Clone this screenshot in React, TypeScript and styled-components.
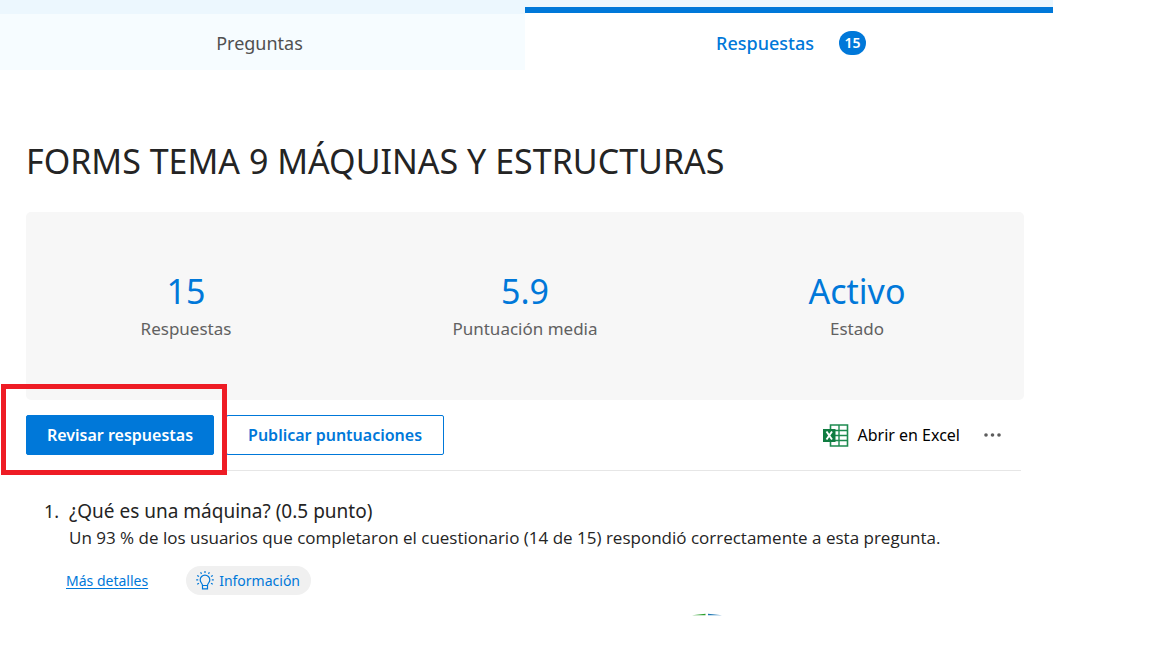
import React from "react";
import styled, { createGlobalStyle } from "styled-components";

const GlobalStyle = createGlobalStyle`
  * { box-sizing: border-box; }
  body {
    margin: 0;
    background: #fff;
    color: #242424;
    font-family: "Noto Sans", "Open Sans", sans-serif;
  }
  button { font-family: inherit; cursor: pointer; }
`;

const Page = styled.div`
  width: 100%;
  max-width: 1053px;
`;

const Tabs = styled.nav`
  display: grid;
  grid-template-columns: 525fr 528fr;
  height: 70px;
  background: linear-gradient(#ecf7fe 14px, #fff 14px);
`;

const Tab = styled.button<{ $active?: boolean }>`
  display: flex;
  align-items: center;
  justify-content: center;
  gap: 25px;
  margin: ${(p) => (p.$active ? "7px 0 0" : "14px 0 0")};
  padding: ${(p) => (p.$active ? "2px 0 0 4px" : "2px 6px 0 0")};
  border: 0;
  border-top: ${(p) => (p.$active ? "6px solid #0078d9" : "0")};
  background: ${(p) => (p.$active ? "#fff" : "#f6fcff")};
  color: ${(p) => (p.$active ? "#0078d9" : "#505050")};
  font-size: 18px;
  font-weight: ${(p) => (p.$active ? 500 : 400)};
`;

const Badge = styled.span`
  display: flex;
  align-items: center;
  justify-content: center;
  width: 27px;
  height: 24px;
  border-radius: 12px;
  background: #0078d9;
  color: #fff;
  font-size: 14px;
  font-weight: 600;
`;

const Main = styled.main`
  padding: 67px 29px 0 26px;
`;

const Title = styled.h1`
  margin: 0 0 27px;
  font-size: 34px;
  line-height: 48px;
  font-weight: 400;
`;

const Summary = styled.section`
  display: grid;
  grid-template-columns: 320fr 358fr 306fr;
  align-content: center;
  height: 188px;
  padding: 3px 14px 0 0;
  border-radius: 5px;
  background: #f7f7f7;
  text-align: center;
`;

const StatValue = styled.div`
  color: #0078d9;
  font-size: 34px;
  line-height: 42px;
`;

const StatLabel = styled.div`
  color: #616161;
  font-size: 17px;
  line-height: 34px;
`;

const Actions = styled.div`
  display: flex;
  align-items: center;
  margin-right: 3px;
  padding: 15px 0;
  border-bottom: 1px solid #e6e6e6;
`;

const Highlighted = styled.div`
  position: relative;
  margin-right: 12px;
`;

const HighlightFrame = styled.span`
  position: absolute;
  inset: -31px -13px -20px -25px;
  border: 5px solid #ee1c25;
  pointer-events: none;
`;

const Button = styled.button<{ $primary?: boolean }>`
  display: block;
  height: 40px;
  padding: ${(p) => (p.$primary ? "0 20px" : "0 21px")};
  border: 1px solid #0078d9;
  border-radius: 2px;
  background: ${(p) => (p.$primary ? "#0078d9" : "#fff")};
  color: ${(p) => (p.$primary ? "#fff" : "#0078d9")};
  font-size: 16px;
  font-weight: 600;
`;

const ExcelButton = styled.button`
  display: flex;
  align-items: center;
  gap: 8px;
  margin-left: auto;
  padding: 0;
  border: 0;
  background: none;
  color: #000;
  font-size: 16px;
`;

const MoreButton = styled.button`
  display: flex;
  margin: 0 20px 0 24px;
  padding: 0;
  border: 0;
  background: none;
`;

const Question = styled.article`
  display: grid;
  grid-template-columns: 43px 1fr;
  padding-top: 26px;
`;

const Number = styled.span`
  padding-left: 18px;
  font-size: 18px;
  line-height: 28px;
`;

const QuestionTitle = styled.h2`
  margin: 0;
  font-size: 19px;
  line-height: 28px;
  font-weight: 400;
`;

const QuestionText = styled.p`
  margin: 0;
  font-family: "Open Sans", "Noto Sans", sans-serif;
  font-size: 17px;
  line-height: 26px;
`;

const Links = styled.div`
  display: flex;
  align-items: center;
  gap: 38px;
  margin: 15px 0 0 -3px;
`;

const DetailsLink = styled.a`
  color: #0078d9;
  font-size: 14px;
  text-underline-offset: 2px;
`;

const InfoButton = styled.button`
  display: flex;
  align-items: center;
  gap: 5px;
  height: 29px;
  padding: 0 11px 0 10px;
  border: 0;
  border-radius: 15px;
  background: #f0f0f0;
  color: #0078d9;
  font-size: 14px;
`;

const Chart = styled.svg`
  display: block;
  margin: 18px 0 0 622px;
`;

const ExcelIcon = () => (
  <svg width="26" height="23" viewBox="0 0 26 23" aria-hidden="true">
    <path d="M7.5 1h17v21h-17z" fill="#fff" stroke="#1e8a50" strokeWidth="1.6" />
    <path d="M7 6.5h17M7 11.5h17M7 16.5h17M16 1v21" stroke="#1e8a50" strokeWidth="1.4" />
    <path d="M0 5h12.5v13H0z" fill="#107c41" />
    <path d="M3.5 7.5l5.5 8M9 7.5l-5.5 8" stroke="#fff" strokeWidth="1.9" />
  </svg>
);

const DotsIcon = () => (
  <svg width="17" height="5" viewBox="0 0 17 5" fill="#5c5c5c" aria-hidden="true">
    <circle cx="2" cy="2" r="1.8" />
    <circle cx="8.5" cy="2" r="1.8" />
    <circle cx="15" cy="2" r="1.8" />
  </svg>
);

const BulbIcon = () => (
  <svg width="18" height="19" viewBox="0 0 18 19" fill="none" stroke="#0078d9" strokeWidth="1.2" aria-hidden="true">
    <path d="M6.5 14.5c0-2.3-2.3-2.8-2.3-5.6a4.8 4.8 0 0 1 9.6 0c0 2.8-2.3 3.3-2.3 5.6z" />
    <path d="M6.5 14.5v3.3h5v-3.3" />
    <path d="M9 0v2M4.6 1.2l.9 1.7M13.4 1.2l-.9 1.7M1.2 4.4l1.8 1M16.8 4.4l-1.8 1M.2 8.9h2M15.8 8.9h2M1.2 13.2l1.8-1M16.8 13.2l-1.8-1" />
  </svg>
);

const stats = [
  { value: "15", label: "Respuestas" },
  { value: "5.9", label: "Puntuación media" },
  { value: "Activo", label: "Estado" },
];

export default function App() {
  return (
    <>
      <GlobalStyle />
      <Page>
        <Tabs>
          <Tab>Preguntas</Tab>
          <Tab $active>
            Respuestas <Badge>15</Badge>
          </Tab>
        </Tabs>
        <Main>
          <Title>FORMS TEMA 9 MÁQUINAS Y ESTRUCTURAS</Title>
          <Summary>
            {stats.map((s) => (
              <div key={s.label}>
                <StatValue>{s.value}</StatValue>
                <StatLabel>{s.label}</StatLabel>
              </div>
            ))}
          </Summary>
          <Actions>
            <Highlighted>
              <Button $primary>Revisar respuestas</Button>
              <HighlightFrame />
            </Highlighted>
            <Button>Publicar puntuaciones</Button>
            <ExcelButton>
              <ExcelIcon />
              Abrir en Excel
            </ExcelButton>
            <MoreButton aria-label="Más opciones">
              <DotsIcon />
            </MoreButton>
          </Actions>
          <Question>
            <Number>1.</Number>
            <div>
              <QuestionTitle>¿Qué es una máquina? (0.5 punto)</QuestionTitle>
              <QuestionText>
                Un 93 % de los usuarios que completaron el cuestionario (14 de 15) respondió correctamente a esta pregunta.
              </QuestionText>
              <Links>
                <DetailsLink href="#detalles">Más detalles</DetailsLink>
                <InfoButton>
                  <BulbIcon />
                  Información
                </InfoButton>
              </Links>
              <Chart width="32" height="3" viewBox="0 0 32 3" aria-hidden="true">
                <path d="M1 2.2L14.5 .8V2.2z" fill="#2ca02c" />
                <path d="M17 .8L31 2.2H17z" fill="#1f77b4" />
              </Chart>
            </div>
          </Question>
        </Main>
      </Page>
    </>
  );
}
